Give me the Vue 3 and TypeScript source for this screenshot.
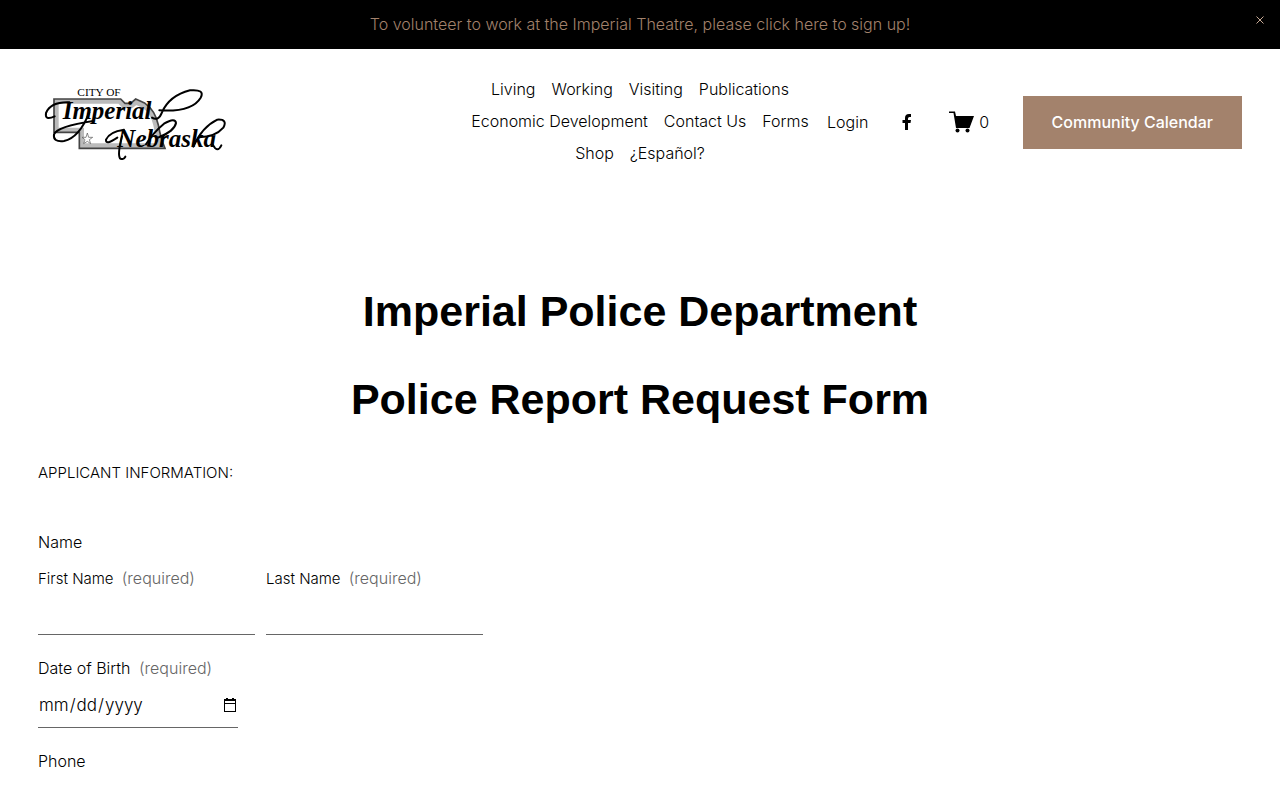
<script setup lang="ts">
import { ref } from 'vue'

interface NavLink {
  label: string
  href: string
}

const showBanner = ref(true)
const cartCount = ref(0)
const firstName = ref('')
const lastName = ref('')
const birthDate = ref('')
const phone = ref('')

const links: NavLink[] = [
  { label: 'Living', href: '#living' },
  { label: 'Working', href: '#working' },
  { label: 'Visiting', href: '#visiting' },
  { label: 'Publications', href: '#publications' },
  { label: 'Economic Development', href: '#economic-development' },
  { label: 'Contact Us', href: '#contact' },
  { label: 'Forms', href: '#forms' },
  { label: 'Shop', href: '#shop' },
  { label: '¿Español?', href: '#espanol' },
]
</script>

<template>
  <div class="page">
    <div v-if="showBanner" class="banner">
      <a class="banner-link" href="#volunteer">To volunteer to work at the Imperial Theatre, please click here to sign up!</a>
      <button class="banner-close" type="button" aria-label="Close announcement" @click="showBanner = false">
        <svg width="8" height="8" viewBox="0 0 8 8" aria-hidden="true">
          <path d="M.5 .5 7.5 7.5M7.5 .5 .5 7.5" />
        </svg>
      </button>
    </div>

    <header class="header">
      <div class="side">
        <a class="logo" href="#home" aria-label="City of Imperial, Nebraska">
          <svg width="192" height="76" viewBox="24 27 576 228" aria-hidden="true">
            <path class="state-shade" d="M79 79H268L282 93L304 93L318 82L342 93Q368 110 377 150Q384 188 394 212H155V165H79Z" />
            <path class="state" d="M72 72H272L285 85L302 85L317 72L345 85Q375 105 385 150Q392 190 405 220H148V172H72Z" />
            <path class="star" d="M172 174 176 187H188L178 194 182 206 172 199 161 206 165 194 156 187H168Z" />
            <text class="city" x="142" y="63">CITY OF</text>
            <text class="script" x="98" y="133">Imperial</text>
            <text class="script" x="262" y="217">Nebraska</text>
            <path class="swash" d="M118 82Q62 80 48 114Q44 138 74 124M178 112Q148 188 102 198Q68 202 72 178Q82 154 190 138M366 128Q385 140 396 112Q418 62 480 46Q526 42 512 68Q486 112 388 106M348 208Q370 172 402 146Q436 126 438 144Q434 168 384 188M490 215Q516 156 562 134Q594 132 580 158Q556 186 506 187M548 208Q562 236 574 211M276 184Q262 238 270 250Q280 256 286 245M262 188Q226 212 228 194Q238 170 282 164" />
          </svg>
        </a>
      </div>

      <nav class="nav" aria-label="Main">
        <a v-for="link in links" :key="link.href" :href="link.href">{{ link.label }}</a>
      </nav>

      <div class="side actions">
        <a class="login" href="#login">Login</a>
        <a class="facebook" href="#facebook" aria-label="Facebook">
          <svg width="10" height="18" viewBox="0 0 10 18" aria-hidden="true">
            <path d="M3 17V10H.5V7H3V5Q3 1 7 1H9V4H7.500Q6 4 6 5.500V7H9L8.500 10H6V17Z" />
          </svg>
        </a>
        <a class="cart" href="#cart" :aria-label="`Cart, ${cartCount} items`">
          <svg width="26" height="22" viewBox="0 0 26 22" aria-hidden="true">
            <path d="M0 .5H6L7 5H25L20.500 17H7L4.500 2H0Z" />
            <circle cx="8.500" cy="19.500" r="2" />
            <circle cx="18.500" cy="19.500" r="2" />
          </svg>
          <span>{{ cartCount }}</span>
        </a>
        <a class="calendar" href="#calendar">Community Calendar</a>
      </div>
    </header>

    <main class="main">
      <h1>Imperial Police Department</h1>
      <h1>Police Report Request Form</h1>
      <p class="section">APPLICANT INFORMATION:</p>

      <form class="form" @submit.prevent>
        <fieldset>
          <legend>Name</legend>
          <div class="names">
            <div class="name-field">
              <label for="first-name">First Name <span class="required">(required)</span></label>
              <input id="first-name" v-model="firstName" type="text" required>
            </div>
            <div class="name-field">
              <label for="last-name">Last Name <span class="required">(required)</span></label>
              <input id="last-name" v-model="lastName" type="text" required>
            </div>
          </div>
        </fieldset>
        <div class="field">
          <label for="birth-date">Date of Birth <span class="required">(required)</span></label>
          <input id="birth-date" v-model="birthDate" class="date" type="date" required>
        </div>
        <div class="field">
          <label for="phone">Phone</label>
          <input id="phone" v-model="phone" type="tel">
        </div>
      </form>
    </main>
  </div>
</template>

<style>
body {
  margin: 0;
  background: #fff;
}
</style>

<style scoped>
.page {
  height: 100vh;
  overflow: auto;
  scrollbar-width: none;
  color: #000;
  font: 300 16px/32px Inter, "Open Sans", sans-serif;
}

a {
  color: inherit;
  text-decoration: none;
}

.banner {
  position: relative;
  display: flex;
  justify-content: center;
  padding: 12px 40px 13px;
  background: #000;
  color: #a3826c;
  font-size: 16px;
  line-height: 24px;
}

.banner-close {
  position: absolute;
  top: 8px;
  right: 8px;
  display: grid;
  place-items: center;
  width: 24px;
  height: 24px;
  padding: 0;
  border: 0;
  background: none;
  cursor: pointer;
}

.banner-close path {
  fill: none;
  stroke: #c9ab96;
}

.header {
  display: flex;
  align-items: center;
  padding: 24px 38px;
}

.side {
  display: flex;
  flex: 1 0 0;
  align-items: center;
}

.logo svg {
  display: block;
  overflow: visible;
}

.state-shade {
  fill: none;
  stroke: #bbb;
  stroke-width: 14;
}

.state {
  fill: none;
  stroke: #444;
  stroke-width: 5;
}

.star {
  fill: #fff;
  stroke: #555;
  stroke-width: 2;
}

.city {
  font: 400 34px "Liberation Serif", serif;
}

.script {
  font: italic 700 75px "Liberation Serif", serif;
}

.swash {
  fill: none;
  stroke: #000;
  stroke-width: 6;
  stroke-linecap: round;
  stroke-linejoin: round;
}

.nav {
  display: flex;
  flex: 0 1 374px;
  flex-wrap: wrap;
  justify-content: center;
  column-gap: 16px;
  padding-bottom: 2px;
}

.actions {
  justify-content: space-between;
}

.facebook svg,
.cart svg {
  display: block;
}

.cart {
  display: flex;
  align-items: center;
  gap: 4px;
  margin-left: 4px;
}

.calendar {
  padding: 10px 29px 11px;
  background: #a3826c;
  color: #fff;
  font-size: 16px;
  font-weight: 500;
}

.main {
  padding: 88px 38px;
}

h1 {
  margin: 0 0 32px;
  font: 700 43px/56px "Liberation Sans", Arial, sans-serif;
  text-align: center;
}

.section {
  margin: 0 0 41px;
  font-size: 15px;
  line-height: 28px;
}

.form {
  display: flex;
  flex-direction: column;
  gap: 19px;
}

fieldset {
  min-width: 0;
  margin: 0;
  padding: 0;
  border: 0;
}

legend {
  padding: 0;
  line-height: 28px;
}

.names {
  display: flex;
  gap: 11px;
  padding-top: 9px;
}

.name-field {
  display: flex;
  flex: 0 1 217px;
  flex-direction: column;
  min-width: 0;
  font-size: 15px;
  line-height: 26px;
}

.name-field input {
  height: 43px;
}

.field {
  display: flex;
  flex-direction: column;
  align-items: flex-start;
  line-height: 28px;
}

.required {
  margin-left: 4px;
  color: #666;
  font-size: 16px;
}

input {
  box-sizing: border-box;
  height: 46px;
  padding: 0;
  border: 0;
  border-bottom: 1px solid #666;
  border-radius: 0;
  outline: 0;
  background: transparent;
  color: #000;
  font: 300 17px/28px Inter, "Open Sans", sans-serif;
}

.date {
  width: 200px;
}

.date::-webkit-calendar-picker-indicator {
  width: 12px;
  height: 14px;
  padding: 0;
  margin-right: 2px;
  background: url("data:image/svg+xml,%3Csvg xmlns='http://www.w3.org/2000/svg' viewBox='0 0 12 14'%3E%3Cpath d='M2 0h2v1h4V0h2v1h2v13H0V1h2zM1 3v2h10V3zM1 6v7h10V6z' fill-rule='evenodd'/%3E%3C/svg%3E") center / 12px 14px no-repeat;
}
</style>
